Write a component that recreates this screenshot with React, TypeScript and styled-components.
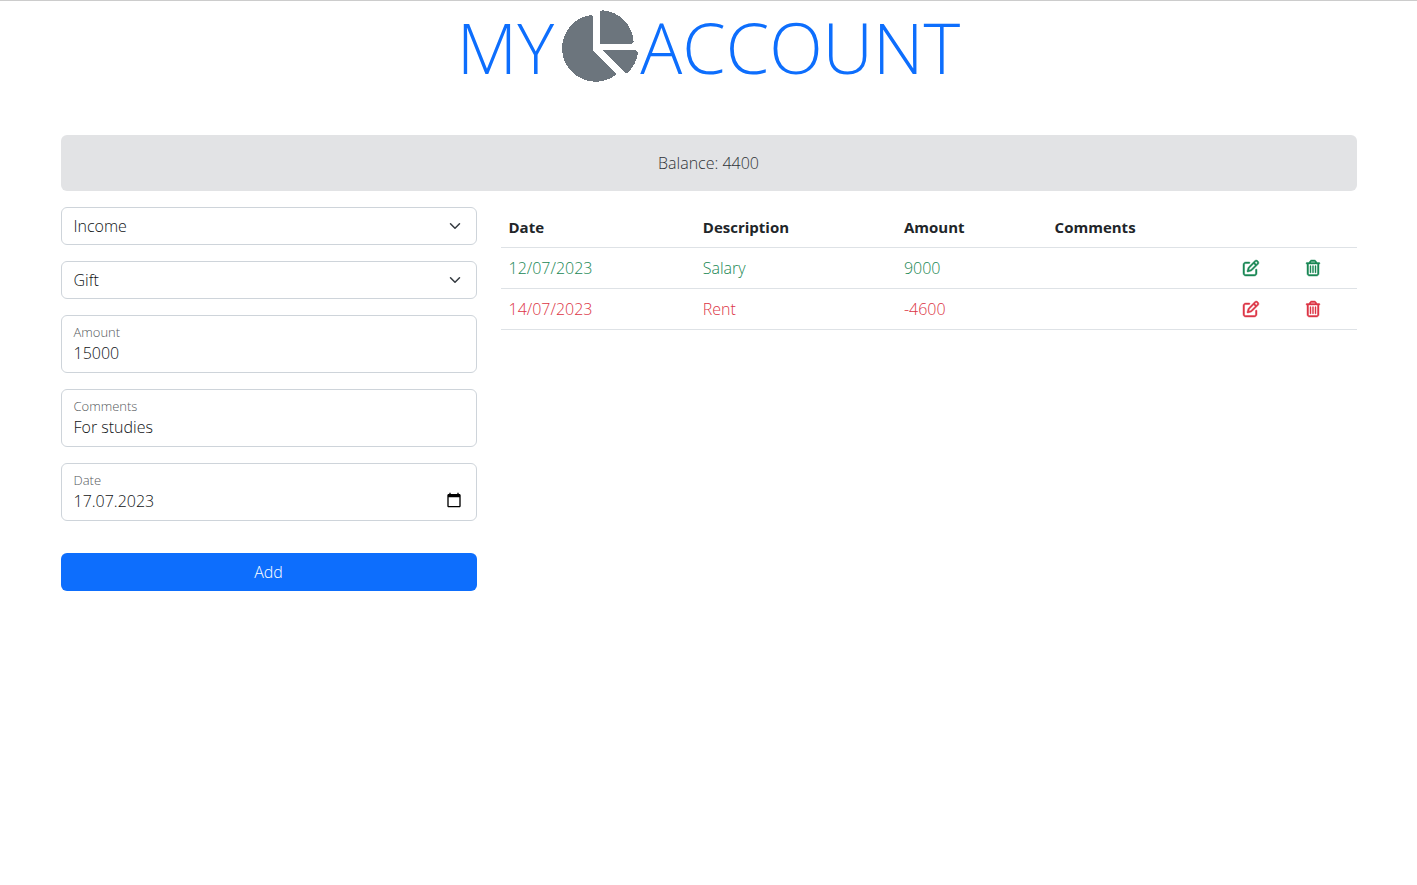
import React, { useState } from "react";
import styled, { createGlobalStyle } from "styled-components";
import { FaChartPie } from "react-icons/fa";
import { FaRegPenToSquare, FaRegTrashCan } from "react-icons/fa6";

const GlobalStyle = createGlobalStyle`
  *, *::before, *::after { box-sizing: border-box; }
  body {
    margin: 0;
    background: #fff;
    color: #212529;
    font-family: "Open Sans", "Noto Sans", sans-serif;
    font-size: 16px;
    line-height: 24px;
  }
`;

const Page = styled.div`
  border-top: 1px solid #ccc;
`;

const Header = styled.header`
  display: flex;
  justify-content: center;
  margin-bottom: 42px;
`;

const Title = styled.h1`
  display: flex;
  align-items: center;
  margin: 0;
  color: #0d6efd;
  font-size: 70px;
  font-weight: 300;
  line-height: 92px;

  svg {
    width: 76px;
    height: 72px;
    margin: 0 2px 2px 8px;
    color: #6c757d;
    shape-rendering: crispEdges;
  }
`;

const Container = styled.main`
  max-width: 1320px;
  margin: 0 auto;
  padding: 0 12px;
`;

const Balance = styled.output`
  display: block;
  margin-bottom: 16px;
  padding: 16px;
  border-radius: 6px;
  background: #e2e3e5;
  color: #303438;
  text-align: center;
  font-weight: 300;
`;

const Columns = styled.div`
  display: grid;
  grid-template-columns: minmax(0, 416fr) minmax(0, 856fr);
  gap: 24px;
  align-items: start;
`;

const Form = styled.form`
  display: flex;
  flex-direction: column;
  gap: 16px;
`;

const SelectBox = styled.div`
  display: grid;
  align-items: center;

  select, svg { grid-area: 1 / 1; }

  svg {
    justify-self: end;
    margin-right: 16px;
    pointer-events: none;
  }
`;

const Select = styled.select`
  appearance: none;
  width: 100%;
  height: 38px;
  padding: 0 36px 0 12px;
  border: 1px solid #ced4da;
  border-radius: 6px;
  background: #fff;
  color: #101316;
  font: inherit;
  font-weight: 300;
`;

const Field = styled.div`
  display: grid;
  grid-template-columns: 1fr auto;
  align-content: start;
  height: 58px;
  padding: 8px 12px;
  border: 1px solid #ced4da;
  border-radius: 6px;
  background: #fff;

  &:focus-within { border-color: #86b7fe; }
`;

const FieldLabel = styled.label`
  grid-column: 1 / -1;
  color: #55595c;
  font-size: 13px;
  font-weight: 300;
  line-height: 17px;
`;

const FieldInput = styled.input`
  width: 100%;
  height: 24px;
  padding: 0;
  border: 0;
  outline: 0;
  background: transparent;
  color: #101316;
  font: inherit;
  font-weight: 300;
`;

const PickerButton = styled.button`
  display: flex;
  align-items: center;
  height: 22px;
  padding: 0 2px;
  border: 0;
  background: none;
  color: #000;
  cursor: pointer;
`;

const SubmitButton = styled.button`
  height: 38px;
  margin-top: 16px;
  border: 0;
  border-radius: 6px;
  background: #0d6efd;
  color: #fff;
  font: inherit;
  font-weight: 300;
  cursor: pointer;
`;

const Table = styled.table`
  width: 100%;
  table-layout: fixed;
  border-collapse: separate;
  border-spacing: 0;
`;

const HeadCell = styled.th<{ $share: number }>`
  width: ${(p) => p.$share}%;
  height: 41px;
  padding: 8px;
  border-bottom: 1px solid #dee2e6;
  text-align: left;
  font-size: 15px;
  font-weight: 700;
`;

const Cell = styled.td<{ $income: boolean }>`
  height: 41px;
  padding: 8px;
  border-bottom: 1px solid #dee2e6;
  color: ${(p) => (p.$income ? "#198754" : "#dc3545")};
  font-weight: 300;
`;

const IconButton = styled.button`
  display: flex;
  align-items: center;
  height: 24px;
  padding: 0;
  border: 0;
  background: none;
  color: inherit;
  font-size: 16px;
  cursor: pointer;

  svg {
    overflow: visible;
    stroke-width: 14px;
  }
`;

const Chevron = () => (
  <svg width="12" height="12" viewBox="0 0 16 16" aria-hidden="true">
    <path fill="none" stroke="#343a40" strokeLinecap="round" strokeLinejoin="round" strokeWidth="2" d="m2 5 6 6 6-6" />
  </svg>
);

const CalendarIcon = () => (
  <svg width="16" height="16" viewBox="0 0 24 24" aria-hidden="true">
    <path fill="currentColor" d="M20 3h-1V1h-2v2H7V1H5v2H4c-1.100 0-2 .9-2 2v16c0 1.100.9 2 2 2h16c1.100 0 2-.9 2-2V5c0-1.100-.9-2-2-2zm0 18H4V8h16v13z" />
  </svg>
);

const columns = [
  { name: "Date", share: 22.7 },
  { name: "Description", share: 23.5 },
  { name: "Amount", share: 17.6 },
  { name: "Comments", share: 22 },
  { name: "", share: 7.3 },
  { name: "", share: 6.9 },
];

const entries = [
  { date: "12/07/2023", description: "Salary", amount: 9000, comments: "" },
  { date: "14/07/2023", description: "Rent", amount: -4600, comments: "" },
];

export default function App() {
  const [amount, setAmount] = useState("15000");
  const [comments, setComments] = useState("For studies");
  const [date, setDate] = useState("17.07.2023");
  const balance = entries.reduce((sum, entry) => sum + entry.amount, 0);

  return (
    <Page>
      <GlobalStyle />
      <Header>
        <Title>
          <span>MY</span>
          <FaChartPie aria-hidden="true" />
          <span>ACCOUNT</span>
        </Title>
      </Header>
      <Container>
        <Balance>{`Balance: ${balance}`}</Balance>
        <Columns>
          <Form onSubmit={(e) => e.preventDefault()}>
            <SelectBox>
              <Select aria-label="Type" defaultValue="Income">
                <option>Income</option>
              </Select>
              <Chevron />
            </SelectBox>
            <SelectBox>
              <Select aria-label="Category" defaultValue="Gift">
                <option>Gift</option>
              </Select>
              <Chevron />
            </SelectBox>
            <Field>
              <FieldLabel htmlFor="amount">Amount</FieldLabel>
              <FieldInput id="amount" inputMode="numeric" value={amount} onChange={(e) => setAmount(e.target.value)} />
            </Field>
            <Field>
              <FieldLabel htmlFor="comments">Comments</FieldLabel>
              <FieldInput id="comments" value={comments} onChange={(e) => setComments(e.target.value)} />
            </Field>
            <Field>
              <FieldLabel htmlFor="date">Date</FieldLabel>
              <FieldInput id="date" value={date} onChange={(e) => setDate(e.target.value)} />
              <PickerButton type="button" aria-label="Open calendar">
                <CalendarIcon />
              </PickerButton>
            </Field>
            <SubmitButton type="submit">Add</SubmitButton>
          </Form>
          <Table>
            <thead>
              <tr>
                {columns.map((column, i) => (
                  <HeadCell key={i} scope="col" $share={column.share}>{column.name}</HeadCell>
                ))}
              </tr>
            </thead>
            <tbody>
              {entries.map((entry) => {
                const income = entry.amount > 0;
                return (
                  <tr key={entry.date}>
                    <Cell $income={income}>{entry.date}</Cell>
                    <Cell $income={income}>{entry.description}</Cell>
                    <Cell $income={income}>{entry.amount}</Cell>
                    <Cell $income={income}>{entry.comments}</Cell>
                    <Cell $income={income}>
                      <IconButton type="button" aria-label="Edit"><FaRegPenToSquare /></IconButton>
                    </Cell>
                    <Cell $income={income}>
                      <IconButton type="button" aria-label="Delete"><FaRegTrashCan /></IconButton>
                    </Cell>
                  </tr>
                );
              })}
            </tbody>
          </Table>
        </Columns>
      </Container>
    </Page>
  );
}
